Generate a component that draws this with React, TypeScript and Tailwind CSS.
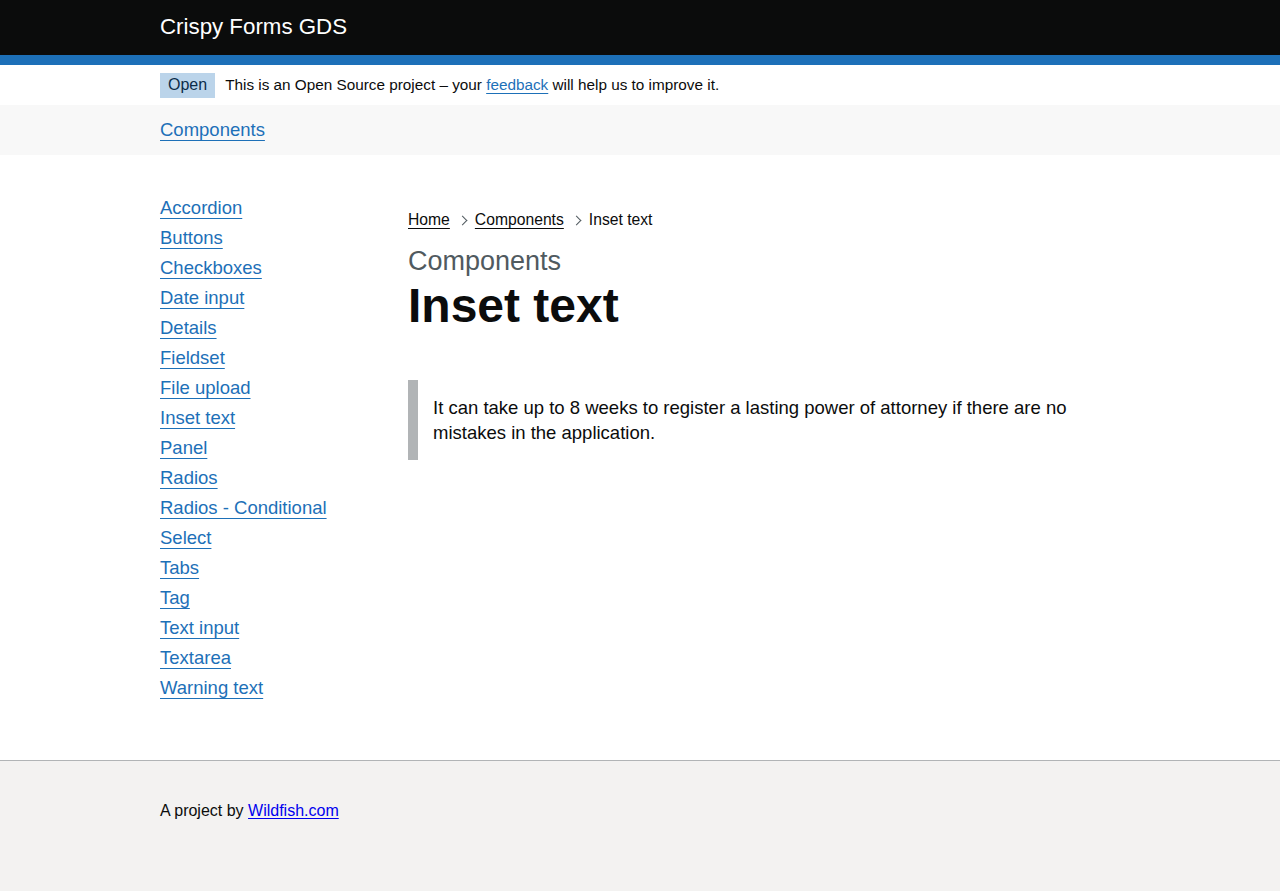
import React from "react";

const font = { fontFamily: '"Liberation Sans", Arial, sans-serif' };

const navItems = [
  "Accordion",
  "Buttons",
  "Checkboxes",
  "Date input",
  "Details",
  "Fieldset",
  "File upload",
  "Inset text",
  "Panel",
  "Radios",
  "Radios - Conditional",
  "Select",
  "Tabs",
  "Tag",
  "Text input",
  "Textarea",
  "Warning text",
];

function Chevron() {
  return (
    <span className="mx-[9px] inline-block h-[7px] w-[7px] rotate-45 border-r border-t border-[#505a5f]" />
  );
}

export default function App() {
  return (
    <div className="min-h-[891px] flex flex-col bg-white text-[#0b0c0c]" style={font}>
      <header className="bg-[#0b0c0c]">
        <div className="h-[55px] flex items-center pl-[160px]">
          <span className="text-white text-[22.3px] leading-none">Crispy Forms GDS</span>
        </div>
        <div className="h-[10px] bg-[#1d70b8]" />
      </header>

      <div className="h-[40px] flex items-center pl-[160px] text-[15.3px]">
        <span className="bg-[#bbd4ea] text-[#0c2d4a] h-[25px] px-[8px] flex items-center text-[16px]">Open</span>
        <span className="ml-[10px]">
          This is an Open Source project – your{" "}
          <a href="#" className="text-[#1d70b8] underline underline-offset-[3px]">feedback</a>{" "}
          will help us to improve it.
        </span>
      </div>

      <div className="h-[50px] bg-[#f8f8f8] flex items-center pl-[160px]">
        <a href="#" className="text-[18.5px] text-[#1d70b8] underline underline-offset-[4px]">Components</a>
      </div>

      <main className="flex-1 flex pl-[160px] pt-[38px] pb-[57px]">
        <nav className="w-[248px] shrink-0">
          <ul>
            {navItems.map((n) => (
              <li key={n} className="h-[30px] flex items-center">
                <a href="#" className="text-[18.5px] text-[#1d70b8] underline underline-offset-[4px]">{n}</a>
              </li>
            ))}
          </ul>
        </nav>
        <div className="w-[712px] pt-[15px]">
          <div className="flex items-center text-[15.7px] leading-[24px]">
            <a href="#" className="text-[#0b0c0c] underline underline-offset-[3px]">Home</a>
            <Chevron />
            <a href="#" className="text-[#0b0c0c] underline underline-offset-[3px]">Components</a>
            <Chevron />
            <span>Inset text</span>
          </div>
          <div className="mt-[14px] text-[27px] leading-[30px] text-[#505a5f]">Components</div>
          <h1 className="mt-[5px] text-[48px] leading-[50px] font-bold">Inset text</h1>
          <div className="mt-[49px] border-l-[10px] border-[#b1b4b6] pl-[15px] pr-[15px] py-[15px] text-[18.5px] leading-[25px]">
            It can take up to 8 weeks to register a lasting power of attorney if there are no mistakes in the application.
          </div>
        </div>
      </main>

      <footer className="bg-[#f3f2f1] border-t border-[#b1b4b6] h-[131px] pl-[160px] pt-[40px] text-[16px] leading-[20px]">
        A project by{" "}
        <a href="#" className="text-[#0000ee] underline underline-offset-[2px]">Wildfish.com</a>
      </footer>
    </div>
  );
}
